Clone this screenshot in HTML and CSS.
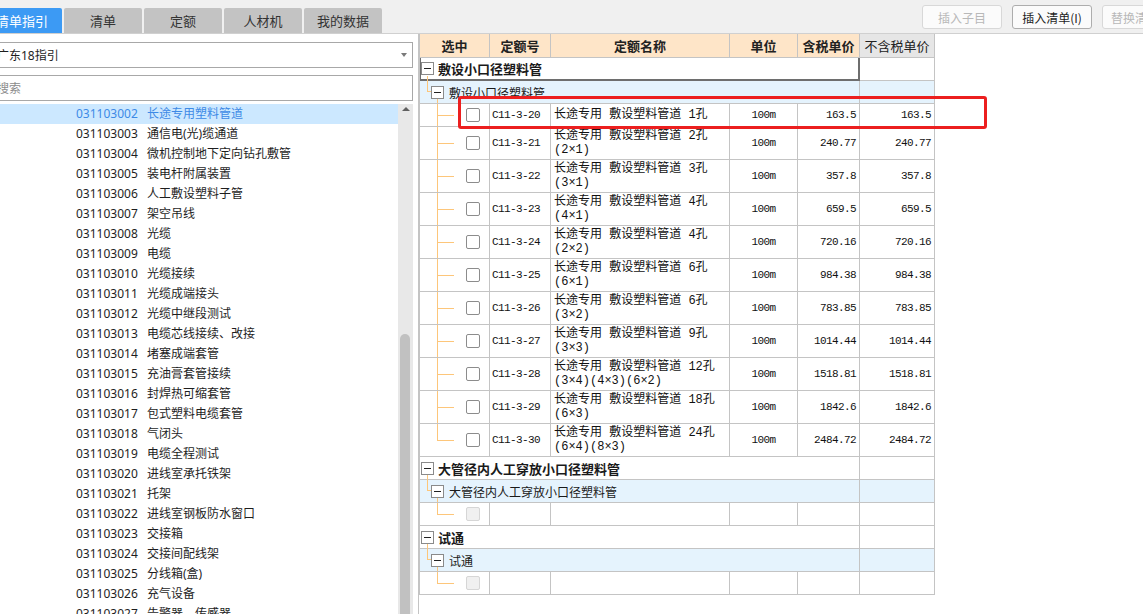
FILE: index.html
```html
<!DOCTYPE html>
<html lang="zh-CN">
<head>
<meta charset="utf-8">
<title>清单指引</title>
<link rel="stylesheet" href="styles.css">
</head>
<body>
<div class="topbar">
  <div class="tabs">
    <div class="tab active">清单指引</div>
    <div class="tab">清单</div>
    <div class="tab">定额</div>
    <div class="tab">人材机</div>
    <div class="tab">我的数据</div>
  </div>
  <div class="actions">
    <button class="btn" disabled>插入子目</button>
    <button class="btn on">插入清单(I)</button>
    <button class="btn wide" disabled>替换清单</button>
  </div>
</div>
<div class="main">
  <div class="lp">
    <div class="lp-inner">
      <div class="select"><span>广东18指引</span><span class="caret"></span></div>
      <div class="search">搜索</div>
      <div class="list">
        <div class="items">
          <div class="item sel-item"><span class="icode">031103002</span>长途专用塑料管道</div>
          <div class="item"><span class="icode">031103003</span>通信电(光)缆通道</div>
          <div class="item"><span class="icode">031103004</span>微机控制地下定向钻孔敷管</div>
          <div class="item"><span class="icode">031103005</span>装电杆附属装置</div>
          <div class="item"><span class="icode">031103006</span>人工敷设塑料子管</div>
          <div class="item"><span class="icode">031103007</span>架空吊线</div>
          <div class="item"><span class="icode">031103008</span>光缆</div>
          <div class="item"><span class="icode">031103009</span>电缆</div>
          <div class="item"><span class="icode">031103010</span>光缆接续</div>
          <div class="item"><span class="icode">031103011</span>光缆成端接头</div>
          <div class="item"><span class="icode">031103012</span>光缆中继段测试</div>
          <div class="item"><span class="icode">031103013</span>电缆芯线接续、改接</div>
          <div class="item"><span class="icode">031103014</span>堵塞成端套管</div>
          <div class="item"><span class="icode">031103015</span>充油膏套管接续</div>
          <div class="item"><span class="icode">031103016</span>封焊热可缩套管</div>
          <div class="item"><span class="icode">031103017</span>包式塑料电缆套管</div>
          <div class="item"><span class="icode">031103018</span>气闭头</div>
          <div class="item"><span class="icode">031103019</span>电缆全程测试</div>
          <div class="item"><span class="icode">031103020</span>进线室承托铁架</div>
          <div class="item"><span class="icode">031103021</span>托架</div>
          <div class="item"><span class="icode">031103022</span>进线室钢板防水窗口</div>
          <div class="item"><span class="icode">031103023</span>交接箱</div>
          <div class="item"><span class="icode">031103024</span>交接间配线架</div>
          <div class="item"><span class="icode">031103025</span>分线箱(盒)</div>
          <div class="item"><span class="icode">031103026</span>充气设备</div>
          <div class="item"><span class="icode">031103027</span>告警器、传感器</div>
        </div>
        <div class="sbar">
          <div class="sbar-up"><span class="tri"></span></div>
          <div class="sbar-thumb"></div>
        </div>
      </div>
    </div>
  </div>
  <div class="rp">
    <div class="grid">
      <div class="row hdr">
        <div>选中</div><div>定额号</div><div>定额名称</div><div>单位</div><div>含税单价</div><div class="plain">不含税单价</div>
      </div>

      <div class="row grp">
        <div class="gcell focus"><span class="tbox"></span>敷设小口径塑料管</div><div></div>
      </div>
      <div class="row sub">
        <div class="scell"><span class="tbox"></span>敷设小口径塑料管</div><div></div>
      </div>
      <div class="row one">
        <div class="sel"><span class="cb"></span></div><div class="code">C11-3-20</div><div class="name">长途专用 敷设塑料管道 1孔</div><div class="unit">100m</div><div class="num">163.5</div><div class="num">163.5</div>
      </div>
      <div class="row two">
        <div class="sel"><span class="cb"></span></div><div class="code">C11-3-21</div><div class="name">长途专用 敷设塑料管道 2孔<br>(2×1)</div><div class="unit">100m</div><div class="num">240.77</div><div class="num">240.77</div>
      </div>
      <div class="row two">
        <div class="sel"><span class="cb"></span></div><div class="code">C11-3-22</div><div class="name">长途专用 敷设塑料管道 3孔<br>(3×1)</div><div class="unit">100m</div><div class="num">357.8</div><div class="num">357.8</div>
      </div>
      <div class="row two">
        <div class="sel"><span class="cb"></span></div><div class="code">C11-3-23</div><div class="name">长途专用 敷设塑料管道 4孔<br>(4×1)</div><div class="unit">100m</div><div class="num">659.5</div><div class="num">659.5</div>
      </div>
      <div class="row two">
        <div class="sel"><span class="cb"></span></div><div class="code">C11-3-24</div><div class="name">长途专用 敷设塑料管道 4孔<br>(2×2)</div><div class="unit">100m</div><div class="num">720.16</div><div class="num">720.16</div>
      </div>
      <div class="row two">
        <div class="sel"><span class="cb"></span></div><div class="code">C11-3-25</div><div class="name">长途专用 敷设塑料管道 6孔<br>(6×1)</div><div class="unit">100m</div><div class="num">984.38</div><div class="num">984.38</div>
      </div>
      <div class="row two">
        <div class="sel"><span class="cb"></span></div><div class="code">C11-3-26</div><div class="name">长途专用 敷设塑料管道 6孔<br>(3×2)</div><div class="unit">100m</div><div class="num">783.85</div><div class="num">783.85</div>
      </div>
      <div class="row two">
        <div class="sel"><span class="cb"></span></div><div class="code">C11-3-27</div><div class="name">长途专用 敷设塑料管道 9孔<br>(3×3)</div><div class="unit">100m</div><div class="num">1014.44</div><div class="num">1014.44</div>
      </div>
      <div class="row two">
        <div class="sel"><span class="cb"></span></div><div class="code">C11-3-28</div><div class="name">长途专用 敷设塑料管道 12孔<br>(3×4)(4×3)(6×2)</div><div class="unit">100m</div><div class="num">1518.81</div><div class="num">1518.81</div>
      </div>
      <div class="row two">
        <div class="sel"><span class="cb"></span></div><div class="code">C11-3-29</div><div class="name">长途专用 敷设塑料管道 18孔<br>(6×3)</div><div class="unit">100m</div><div class="num">1842.6</div><div class="num">1842.6</div>
      </div>
      <div class="row two">
        <div class="sel last"><span class="cb"></span></div><div class="code">C11-3-30</div><div class="name">长途专用 敷设塑料管道 24孔<br>(6×4)(8×3)</div><div class="unit">100m</div><div class="num">2484.72</div><div class="num">2484.72</div>
      </div>

      <div class="row grp">
        <div class="gcell"><span class="tbox"></span>大管径内人工穿放小口径塑料管</div><div></div>
      </div>
      <div class="row sub">
        <div class="scell"><span class="tbox"></span>大管径内人工穿放小口径塑料管</div><div></div>
      </div>
      <div class="row one">
        <div class="sel last"><span class="cb off"></span></div><div></div><div></div><div></div><div></div><div></div>
      </div>

      <div class="row grp">
        <div class="gcell"><span class="tbox"></span>试通</div><div></div>
      </div>
      <div class="row sub">
        <div class="scell"><span class="tbox"></span>试通</div><div></div>
      </div>
      <div class="row one">
        <div class="sel last"><span class="cb off"></span></div><div></div><div></div><div></div><div></div><div></div>
      </div>
    </div>
    <div class="mark"></div>
  </div>
</div>
</body>
</html>
```

FILE: styles.css
```css
html, body {
  margin: 0;
  padding: 0;
}
body {
  width: 1143px;
  height: 614px;
  overflow: hidden;
  background: #f0f0f0;
  font-family: "Noto Sans", "Noto Sans CJK SC", sans-serif;
  color: #1e1e1e;
}

/* top bar */
.topbar {
  height: 33px;
  display: flex;
  overflow: hidden;
}
.tabs {
  display: flex;
  align-items: flex-end;
  gap: 2px;
}
.tab {
  width: 78px;
  height: 25px;
  box-sizing: border-box;
  background: #c3c3c3;
  border-radius: 2px 2px 0 0;
  font-size: 13px;
  color: #333;
  display: flex;
  align-items: center;
  justify-content: center;
}
.tab.active {
  width: 67px;
  margin-left: -5px;
  justify-content: flex-start;
  padding-left: 1px;
  background: #3c9af4;
  color: #fff;
}
.actions {
  margin-left: auto;
  margin-right: -39px;
  display: flex;
  gap: 10px;
  align-items: flex-start;
  padding-top: 5px;
}
.btn {
  width: 80px;
  height: 24px;
  box-sizing: border-box;
  border: 1px solid #d8d8d8;
  border-radius: 3px;
  background: #fbfbfb;
  font-family: "Noto Sans CJK SC", sans-serif;
  font-size: 12px;
  color: #b8b8b8;
  padding: 0;
}
.btn.wide {
  text-align: left;
  padding-left: 8px;
}
.btn.on {
  border-color: #adadad;
  color: #1e1e1e;
}

/* main */
.main {
  position: relative;
  height: 581px;
  border-top: 1px solid #d0d0d0;
  background: #fff;
  display: flex;
}
.lp {
  width: 419px;
  flex: none;
  box-sizing: border-box;
  border-right: 1px solid #c4c4c4;
  overflow: hidden;
}
.lp-inner {
  margin-left: -10px;
  padding-right: 5px;
  height: 100%;
  display: flex;
  flex-direction: column;
}
.select, .search {
  height: 26px;
  box-sizing: border-box;
  border: 1px solid #a8a8a8;
  font-size: 12px;
  padding-left: 6px;
  display: flex;
  align-items: center;
  flex: none;
}
.select {
  margin-top: 8px;
  color: #1e1e1e;
  justify-content: space-between;
  padding-right: 5px;
}
.caret {
  width: 0;
  height: 0;
  border-left: 3px solid transparent;
  border-right: 3px solid transparent;
  border-top: 4px solid #7a7a7a;
}
.search {
  margin-top: 7px;
  color: #8c8c8c;
}
.list {
  margin-top: 3px;
  flex: 1;
  min-height: 0;
  display: flex;
  overflow: hidden;
}
.items {
  flex: 1;
}
.item {
  height: 20px;
  line-height: 20px;
  font-size: 12px;
  padding-left: 86px;
  white-space: nowrap;
  color: #1e1e1e;
}
.icode {
  display: inline-block;
  width: 71px;
}
.item.sel-item {
  background: #cce8ff;
  color: #3d8ae6;
}
.sbar {
  width: 15px;
  flex: none;
  background: #e8e8e8;
  display: flex;
  flex-direction: column;
}
.sbar-up {
  height: 14px;
  display: flex;
  justify-content: center;
  padding-top: 3px;
  box-sizing: border-box;
}
.tri {
  width: 0;
  height: 0;
  border-left: 4px solid transparent;
  border-right: 4px solid transparent;
  border-bottom: 4px solid #606060;
}
.sbar-thumb {
  margin-top: 216px;
  margin-left: 2px;
  width: 10px;
  flex: 1;
  background: #c1c1c1;
  border-radius: 5px 5px 0 0;
}

/* right grid */
.rp {
  flex: 1;
}
.grid {
  width: 515px;
  border-left: 1px solid #c4c4c4;
  font-family: "Liberation Mono", "Noto Sans CJK SC", monospace;
  font-size: 12px;
  color: #111;
}
.row {
  display: grid;
  grid-template-columns: 70px 61px 179px 68px 62px 75px;
}
.row > div {
  box-sizing: border-box;
  border-right: 1px solid #c4c4c4;
  border-bottom: 1px solid #c4c4c4;
  display: flex;
  align-items: center;
  position: relative;
}
.hdr {
  height: 24px;
}
.hdr > div {
  background: #fee5c8;
  justify-content: center;
  font-family: "Noto Sans CJK SC", sans-serif;
  font-weight: bold;
  font-size: 13px;
  color: #222;
}
.hdr > div.plain {
  background: #e6e6e6;
  font-weight: normal;
}
.grp, .sub, .one {
  height: 23px;
}
.two {
  height: 33px;
}

.gcell {
  grid-column: 1 / 6;
  padding-left: 1px;
  font-family: "Noto Sans CJK SC", sans-serif;
  font-weight: bold;
  font-size: 13px;
  color: #1a1a1a;
}
.gcell.focus {
  border-right: 2px solid #6e6e6e !important;
  border-bottom: 2px solid #6e6e6e !important;
  box-shadow: inset 1px 0 0 #6e6e6e;
}
.gcell .tbox {
  margin-right: 4px;
}
.gcell::after {
  content: "";
  position: absolute;
  left: 7px;
  top: 18px;
  bottom: -2px;
  border-left: 1px solid #fdc67a;
}
.sub > div {
  background: #e5f3fd;
}
.scell {
  grid-column: 1 / 6;
  padding-left: 11px;
  font-family: "Noto Sans CJK SC", sans-serif;
  font-size: 12px;
  color: #1a1a1a;
}
.scell .tbox {
  margin-right: 5px;
}
.scell::before {
  content: "";
  position: absolute;
  left: 7px;
  top: 0;
  width: 3px;
  height: 10px;
  border-left: 1px solid #fdc67a;
  border-bottom: 1px solid #fdc67a;
}
.scell::after {
  content: "";
  position: absolute;
  left: 17px;
  top: 17px;
  bottom: 0;
  border-left: 1px solid #fdc67a;
}
.tbox {
  width: 13px;
  height: 13px;
  flex: none;
  box-sizing: border-box;
  border: 1px solid #8a8a8a;
  background: #fff;
  position: relative;
  z-index: 1;
}
.tbox::after {
  content: "";
  position: absolute;
  left: 2px;
  width: 7px;
  top: 5px;
  height: 1px;
  background: #222;
}

.sel {
  padding-left: 46px;
}
.sel::before {
  content: "";
  position: absolute;
  left: 17px;
  top: 0;
  bottom: 0;
  border-left: 1px solid #fdc67a;
}
.sel.last::before {
  bottom: 50%;
}
.sel::after {
  content: "";
  position: absolute;
  left: 17px;
  width: 17px;
  top: 50%;
  border-top: 1px solid #fdc67a;
}
.cb {
  width: 14px;
  height: 14px;
  box-sizing: border-box;
  border: 1px solid #8c8c8c;
  border-radius: 2px;
  background: #fff;
}
.cb.off {
  border-color: #d6d6d6;
  background: #f0f0f0;
}
.code {
  padding-left: 2px;
  font-size: 11px;
  letter-spacing: -0.6px;
}
.name {
  padding-left: 3px;
  line-height: 14px;
  font-size: 12px;
  white-space: nowrap;
}
.unit {
  justify-content: center;
  font-size: 11px;
  letter-spacing: -0.6px;
}
.num {
  justify-content: flex-end;
  padding-right: 3px;
  font-size: 11px;
  letter-spacing: -0.6px;
}

.mark {
  position: absolute;
  left: 458px;
  top: 62px;
  width: 529px;
  height: 33px;
  box-sizing: border-box;
  border: 3px solid #ec1f1f;
  border-radius: 3px;
  pointer-events: none;
}
```
